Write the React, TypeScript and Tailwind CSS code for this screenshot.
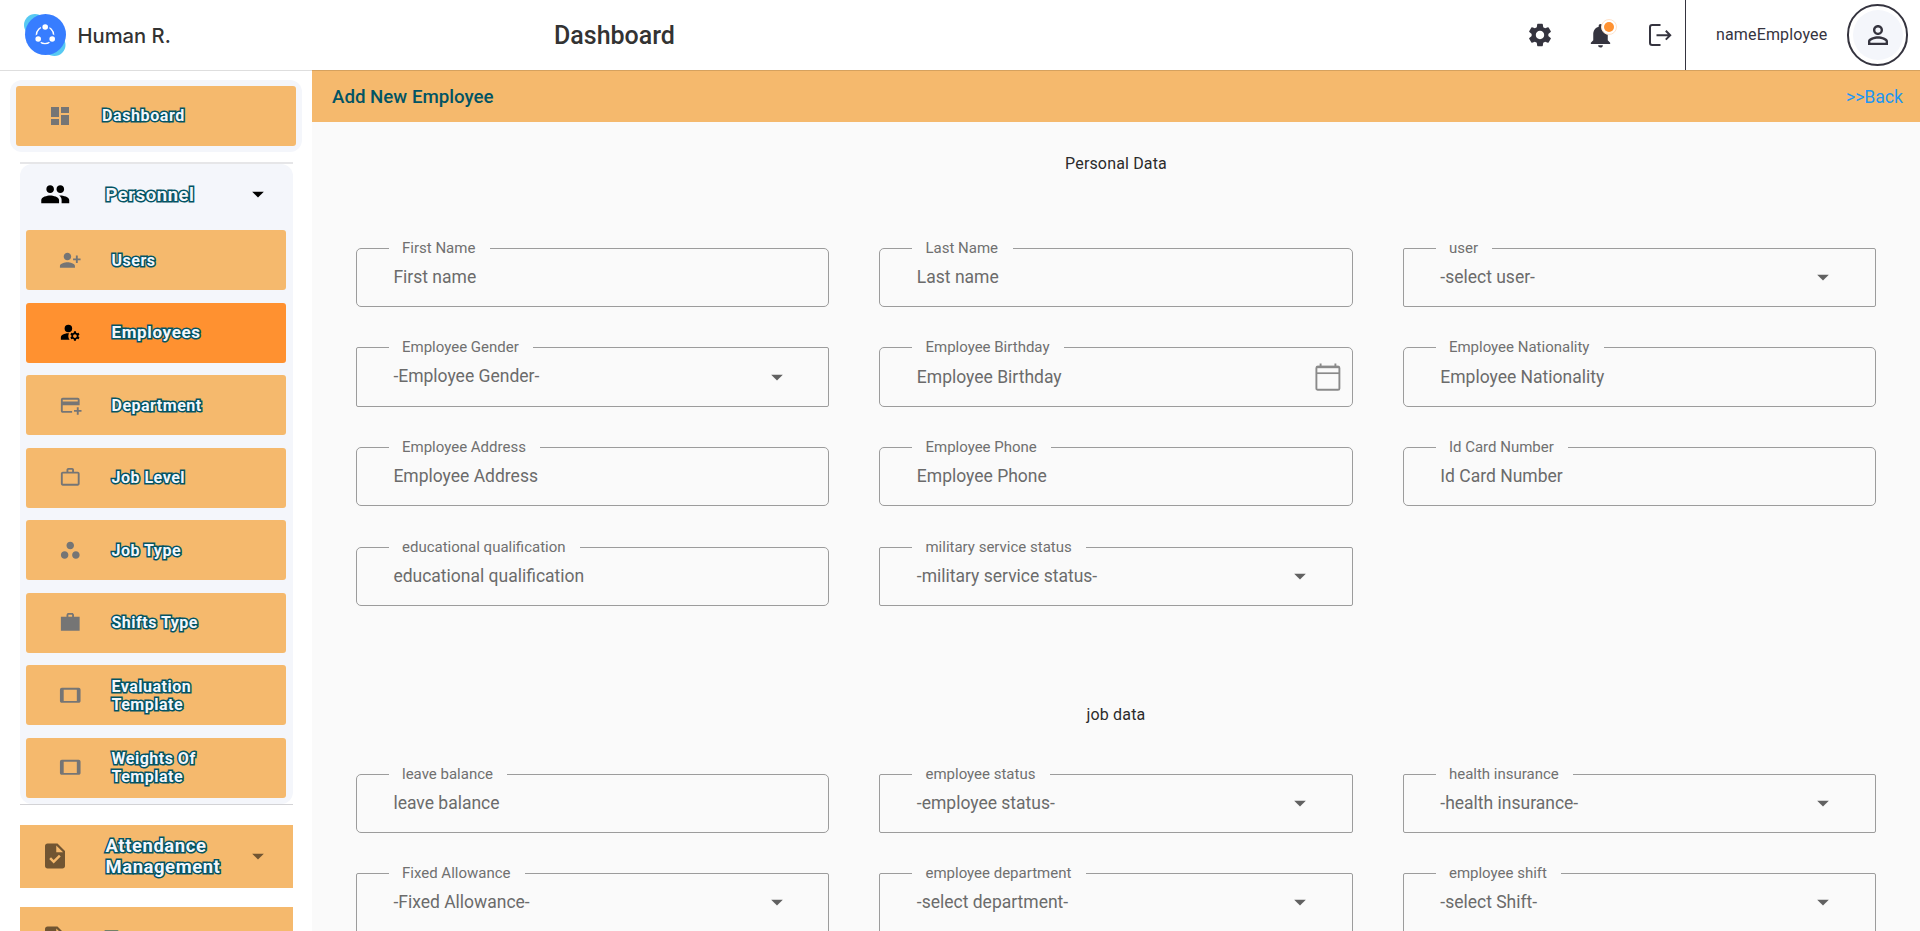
import type { ReactNode } from "react";
import type { IconType } from "react-icons";
import {
  MdAddCard,
  MdArrowDropDown,
  MdDashboard,
  MdGroup,
  MdManageAccounts,
  MdNotifications,
  MdPersonAddAlt1,
  MdPersonOutline,
  MdSettings,
  MdTablet,
  MdTask,
  MdWorkOutline,
  MdWorkspaces,
} from "react-icons/md";

type FieldSpec = { label: string; hint: string; kind?: "text" | "select" | "date" };

const personalFields: FieldSpec[] = [
  { label: "First Name", hint: "First name" },
  { label: "Last Name", hint: "Last name" },
  { label: "user", hint: "-select user-", kind: "select" },
  { label: "Employee Gender", hint: "-Employee Gender-", kind: "select" },
  { label: "Employee Birthday", hint: "Employee Birthday", kind: "date" },
  { label: "Employee Nationality", hint: "Employee Nationality" },
  { label: "Employee Address", hint: "Employee Address" },
  { label: "Employee Phone", hint: "Employee Phone" },
  { label: "Id Card Number", hint: "Id Card Number" },
  { label: "educational qualification", hint: "educational qualification" },
  { label: "military service status", hint: "-military service status-", kind: "select" },
];

const jobFields: FieldSpec[] = [
  { label: "leave balance", hint: "leave balance" },
  { label: "employee status", hint: "-employee status-", kind: "select" },
  { label: "health insurance", hint: "-health insurance-", kind: "select" },
  { label: "Fixed Allowance", hint: "-Fixed Allowance-", kind: "select" },
  { label: "employee department", hint: "-select department-", kind: "select" },
  { label: "employee shift", hint: "-select Shift-", kind: "select" },
];

const SharpWork: IconType = ({ size = 24, className }) => (
  <svg width={size} height={size} viewBox="0 0 24 24" fill="currentColor" className={className}>
    <path d="M22 6h-6V4l-1.2-2H9.2L8 4v2H2v15h20V6zm-8 0h-4V4h4v2z" />
  </svg>
);

const personnelItems: { label: string; icon: IconType; active?: boolean }[] = [
  { label: "Users", icon: MdPersonAddAlt1 },
  { label: "Employees", icon: MdManageAccounts, active: true },
  { label: "Department", icon: MdAddCard },
  { label: "Job Level", icon: MdWorkOutline },
  { label: "Job Type", icon: MdWorkspaces },
  { label: "Shifts Type", icon: SharpWork },
  { label: "Evaluation Template", icon: MdTablet },
  { label: "Weights Of Template", icon: MdTablet },
];

function Outlined({ children, className = "" }: { children: ReactNode; className?: string }) {
  return (
    <span
      className={`font-bold text-[#f4f6fb] [-webkit-text-stroke:3px_#025464] [paint-order:stroke_fill] ${className}`}
    >
      {children}
    </span>
  );
}

function Logo() {
  return (
    <svg width="42" height="42" viewBox="0 0 42 42" className="shrink-0">
      <circle cx="11" cy="11" r="11" fill="#57c9f2" />
      <circle cx="30.5" cy="31" r="11" fill="#57c9f2" />
      <circle cx="21.5" cy="20.5" r="20.5" fill="#377dff" />
      <circle cx="21" cy="21" r="8.6" fill="none" stroke="#fff" strokeWidth="1.4" />
      <g fill="#fff" stroke="#377dff" strokeWidth="1.6">
        <circle cx="21.2" cy="13" r="3.6" />
        <circle cx="14.2" cy="25" r="3.6" />
        <circle cx="28.2" cy="25" r="3.6" />
      </g>
    </svg>
  );
}

function LogoutIcon() {
  return (
    <svg width="24" height="24" viewBox="0 0 24 24" fill="none" stroke="#35343f" strokeWidth="2">
      <path d="M12.5 2H4.2Q2 2 2 4.2V19.8Q2 22 4.2 22H12.5" />
      <path d="M8.5 12.2H22M17.8 7.8L22.2 12.2L17.8 16.6" />
    </svg>
  );
}

function CalendarIcon() {
  return (
    <svg width="26" height="28" viewBox="0 0 26 28" fill="none" stroke="#8a8a8a">
      <rect x="1.4" y="3.6" width="23" height="23.2" rx="1.4" strokeWidth="1.9" />
      <path d="M1.4 10.2H24.4" strokeWidth="1.7" />
      <path d="M1.6 4H24.2" strokeWidth="2.4" />
      <path d="M5.6 0.4V4M20.4 0.4V4" strokeWidth="1.9" />
    </svg>
  );
}

function Field({ label, hint, kind = "text" }: FieldSpec) {
  const isSelect = kind === "select";
  return (
    <div
      className={`relative flex h-[59.4px] items-center border border-[#9c9c9c] pl-[36.4px] ${
        isSelect ? "rounded-[2px] pr-[37.5px]" : "rounded-[5px] pr-[11px]"
      }`}
    >
      <span className="absolute -top-[11px] left-[32px] bg-[#fafafa] pr-[14.5px] pl-[13px] text-[15px] leading-[20px] whitespace-nowrap text-[#707070]">
        {label}
      </span>
      <span className={`flex-1 text-[17.5px] leading-[20px] text-[#6b6b6b] ${isSelect ? "pb-[1.4px]" : "pb-[0.6px]"}`}>
        {hint}
      </span>
      {isSelect && <MdArrowDropDown size={28} className="-mt-px text-[#616161]" />}
      {kind === "date" && <CalendarIcon />}
    </div>
  );
}

function FieldGrid({ fields }: { fields: FieldSpec[] }) {
  return (
    <div className="grid grid-cols-3 gap-x-[50.4px] gap-y-[40.2px] px-[44px]">
      {fields.map((f) => (
        <Field key={f.label} {...f} />
      ))}
    </div>
  );
}

function GroupTile({ label }: { label: string }) {
  return (
    <div className="flex h-[63px] w-[273px] shrink-0 items-center bg-[#f5b96d]">
      <MdTask size={30} className="ml-[20px] shrink-0 text-[#715532]" />
      <Outlined className="ml-[35.5px] w-[120px] pt-px text-[18.4px] leading-[20.3px] tracking-[0.6px]">
        {label}
      </Outlined>
      <MdArrowDropDown size={28} className="ml-[18px] shrink-0 text-[#715532]" />
    </div>
  );
}

export default function App() {
  return (
    <div className="flex h-[931px] w-[1920px] flex-col overflow-hidden bg-white font-['Roboto',sans-serif]">
      <header className="z-10 flex h-[70px] shrink-0 items-center shadow-[0_1px_0_rgba(0,0,0,0.13)]">
        <div className="flex w-[554px] items-center pl-[24px]">
          <Logo />
          <span className="ml-[11.5px] pt-[2px] font-['Inter',sans-serif] text-[20.2px] font-medium text-[#333]">
            Human R.
          </span>
        </div>
        <h1 className="flex-1 pt-[2px] text-[25px] font-medium text-[#333]">Dashboard</h1>
        <div className="flex h-full items-center text-[#35343f]">
          <MdSettings size={28} className="mr-[32px]" />
          <span className="relative mr-[33.5px]">
            <MdNotifications size={29} />
            <span className="absolute -top-[2px] left-[15px] flex size-[16px] items-center justify-center rounded-full border border-[#ffe3cb] bg-white">
              <span className="size-[10px] rounded-full bg-[#ff9130]" />
            </span>
          </span>
          <LogoutIcon />
        </div>
        <div className="ml-[13px] flex h-full w-[235px] items-center border-l border-[#35343f] pl-[30px]">
          <span className="flex-1 text-[16px] tracking-[0.15px] text-[#35343f]">nameEmployee</span>
          <div className="mr-[12px] flex h-[62px] w-[61px] items-center justify-center rounded-full border-2 border-[#35343f]">
            <div className="flex size-[50px] items-center justify-center rounded-full bg-[#f4f6fb]">
              <MdPersonOutline size={30} className="text-[#35343f]" />
            </div>
          </div>
        </div>
      </header>

      <div className="flex min-h-0 flex-1">
        <aside className="flex w-[312px] shrink-0 flex-col overflow-hidden">
          <div className="mt-[10px] ml-[10px] h-[72px] w-[292px] shrink-0 rounded-[12px] bg-[#f4f6fb] p-[6px]">
            <div className="flex h-[60px] items-center rounded-[3px] bg-[#f5b96d]">
              <MdDashboard size={24} className="ml-[32px] text-[#757575]" />
              <Outlined className="ml-[30px] text-[16px] tracking-[0.6px]">Dashboard</Outlined>
            </div>
          </div>

          <div className="mt-[10px] ml-[20px] w-[273px] shrink-0 border-t-2 border-b border-t-[#e6e6e8] border-b-[#d3d3d6]">
            <div className="rounded-[12px] bg-[#f4f6fb] pb-[6px]">
              <div className="flex h-[66px] items-center pb-[5px]">
                <MdGroup size={30.5} className="ml-[20px] shrink-0 text-black" />
                <Outlined className="ml-[35px] w-[120px] text-[18.4px] tracking-[0.6px]">Personnel</Outlined>
                <MdArrowDropDown size={28} className="-mt-px ml-[18px] text-black" />
              </div>
              <div className="flex flex-col gap-[12.5px] px-[6px]">
                {personnelItems.map(({ label, icon: Icon, active }) => (
                  <div
                    key={label}
                    className={`flex h-[60px] w-[260px] items-center rounded-[3px] ${
                      active ? "bg-[#ff9130] text-black" : "bg-[#f5b96d] text-[#757575]"
                    }`}
                  >
                    <Icon size={22.5} className="ml-[33px] shrink-0" />
                    <Outlined
                      className={`ml-[30px] w-[110px] ${
                        active
                          ? "pt-px text-[17px] tracking-[0.65px]"
                          : "pt-px text-[16px] leading-[17.6px] tracking-[0.5px]"
                      }`}
                    >
                      {label}
                    </Outlined>
                  </div>
                ))}
              </div>
            </div>
          </div>

          <div className="mt-[20px] ml-[20px] flex flex-col gap-[19.5px]">
            <GroupTile label="Attendance Management" />
            <GroupTile label="Taxes" />
          </div>
        </aside>

        <main className="min-w-0 flex-1 overflow-hidden bg-[#fafafa]">
          <div className="flex h-[52px] items-center justify-between bg-[#f5b96d] pt-[2px] pr-[17px] pl-[20px]">
            <h2 className="text-[18.7px] font-medium text-[#025464]">Add New Employee</h2>
            <a className="text-[17.6px] text-[#2196f3]">&gt;&gt;Back</a>
          </div>
          <section>
            <h3 className="pt-[30px] pb-[71.8px] text-center text-[16px] leading-[24px] tracking-[0.15px] text-[#2b2b2b]">
              Personal Data
            </h3>
            <FieldGrid fields={personalFields} />
          </section>
          <section>
            <h3 className="pt-[96.6px] pb-[47.2px] text-center text-[16px] leading-[24px] tracking-[0.15px] text-[#2b2b2b]">
              job data
            </h3>
            <FieldGrid fields={jobFields} />
          </section>
        </main>
      </div>
    </div>
  );
}
